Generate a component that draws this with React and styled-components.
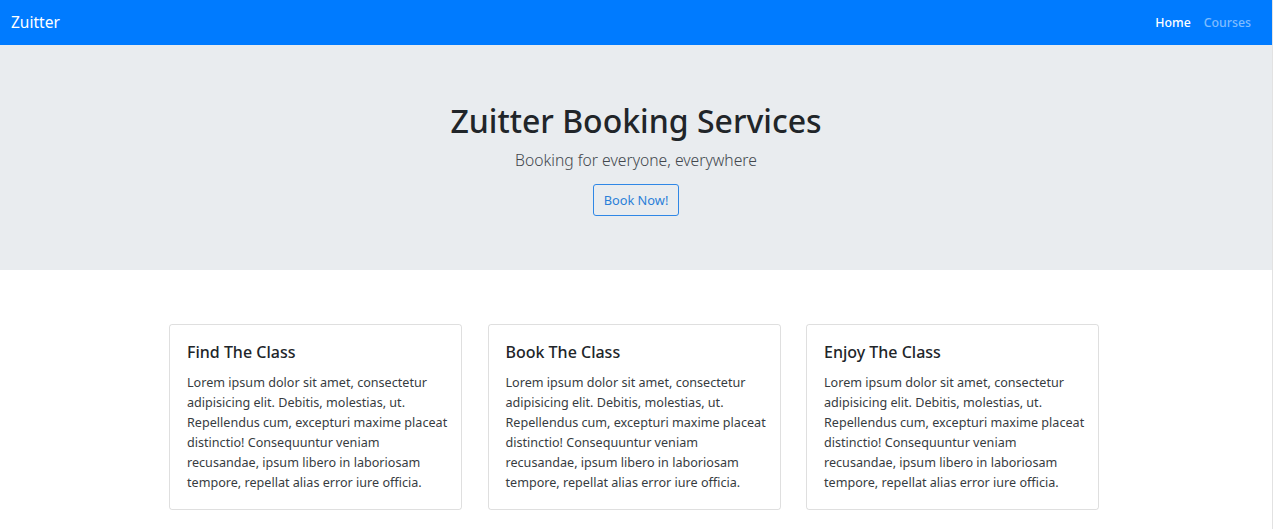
import styled, { createGlobalStyle } from "styled-components";

const GlobalStyle = createGlobalStyle`
    * { box-sizing: border-box; }
    body {
        margin: 0;
        background: #fff;
        font-family: "Noto Sans", "Open Sans", sans-serif;
        color: #212529;
    }
`;

const cards = [
    { title: "Find The Class" },
    { title: "Book The Class" },
    { title: "Enjoy The Class" },
];

const lorem = [
    "Lorem ipsum dolor sit amet, consectetur",
    "adipisicing elit. Debitis, molestias, ut.",
    "Repellendus cum, excepturi maxime placeat",
    "distinctio! Consequuntur veniam",
    "recusandae, ipsum libero in laboriosam",
    "tempore, repellat alias error iure officia.",
];

const App = () => {
    return (
        <Page>
            <GlobalStyle />
            {/* Navbar */}
            <Navbar>
                <Brand>Zuitter</Brand>
                <NavLinks>
                    <NavLink active>Home</NavLink>
                    <NavLink>Courses</NavLink>
                </NavLinks>
            </Navbar>

            {/* Banner */}
            <Jumbotron>
                <Title>Zuitter Booking Services</Title>
                <Lead>Booking for everyone, everywhere</Lead>
                <OutlineButton>Book Now!</OutlineButton>
            </Jumbotron>

            {/* Highlights */}
            <CardRow>
                {cards.map((card) => (
                    <Card key={card.title}>
                        <CardTitle>{card.title}</CardTitle>
                        <CardText>
                            {lorem.map((line, i) => (
                                <span key={i}>{line}<br /></span>
                            ))}
                        </CardText>
                    </Card>
                ))}
            </CardRow>
        </Page>
    );
};

export default App;

// Styled Components
const Page = styled.div`
    width: 1272px;
    min-height: 529px;
    box-shadow: 1px 0 0 #e2e2e2;
`;

const Navbar = styled.nav`
    height: 45px;
    background-color: #007bff;
    display: flex;
    align-items: center;
    justify-content: space-between;
    padding: 0 21px 0 11px;
`;

const Brand = styled.a`
    color: #fff;
    font-size: 15.5px;
    line-height: 1;
`;

const NavLinks = styled.div`
    display: flex;
    gap: 13px;
`;

const NavLink = styled.a`
    color: ${(props) => (props.active ? "#fff" : "rgba(255, 255, 255, 0.5)")};
    font-size: 12.3px;
    font-weight: 500;
`;

const Jumbotron = styled.header`
    background-color: #e9ecef;
    padding: 56px 26px 54px;
    display: flex;
    flex-direction: column;
    align-items: center;
`;

const Title = styled.h1`
    margin: 0 0 7px;
    font-size: 32px;
    line-height: 40px;
    font-weight: 500;
    color: #212529;
`;

const Lead = styled.p`
    margin: 0 0 12px;
    font-size: 15.7px;
    line-height: 24px;
    font-weight: 300;
    color: #42474d;
`;

const OutlineButton = styled.button`
    height: 32px;
    padding: 0 10px;
    border: 1px solid #2f87e6;
    border-radius: 3px;
    background: transparent;
    color: #2b7fd8;
    font-family: inherit;
    font-size: 12.8px;
`;

const CardRow = styled.section`
    margin: 54px auto 0;
    width: 930px;
    display: grid;
    grid-template-columns: repeat(3, 293px);
    justify-content: space-between;
    position: relative;
    left: -2px;
`;

const Card = styled.article`
    border: 1px solid rgba(0, 0, 0, 0.125);
    border-radius: 3px;
    padding: 17px 16px 16px 17px;
    height: 186px;
`;

const CardTitle = styled.h5`
    margin: 0 0 11px;
    font-size: 16px;
    line-height: 20px;
    font-weight: 500;
`;

const CardText = styled.p`
    margin: 0;
    font-size: 12.6px;
    line-height: 20px;
    white-space: nowrap;
    color: #373c41;
`;
